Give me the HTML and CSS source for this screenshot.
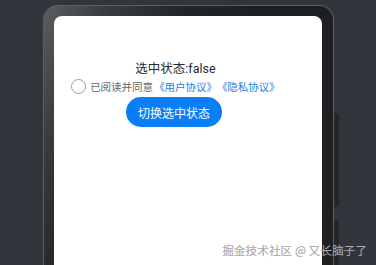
FILE: index.html
```html
<!DOCTYPE html>
<html lang="zh">
<head>
<meta charset="utf-8">
<link rel="stylesheet" href="styles.css">
</head>
<body>
<div class="stage">
  <div class="device">
    <div class="screen">
      <div class="content">
        <div class="status">选中状态:false</div>
        <div class="agree">
          <span class="radio"></span>
          <span class="agree-text">已阅读并同意<span class="link">《用户协议》</span><span class="link link-second">《隐私协议》</span></span>
        </div>
        <button class="toggle">切换选中状态</button>
      </div>
    </div>
  </div>
  <div class="side-buttons">
    <span class="side-btn side-btn-a"></span>
    <span class="side-btn side-btn-b"></span>
  </div>
</div>
<div class="watermark">掘金技术社区 @ 又长脑子了</div>
</body>
</html>
```
FILE: styles.css
```css
html, body {
  margin: 0;
  padding: 0;
  width: 376px;
  height: 265px;
  overflow: hidden;
  background: #31363d;
  font-family: Roboto, "Noto Sans CJK SC", sans-serif;
}
.stage {
  display: flex;
  align-items: flex-start;
  padding: 5px 0 0 43px;
}
.device {
  width: 268px;
  height: 300px;
  padding: 10px 11px 0 10px;
  border: 1px solid #5d5f63;
  border-bottom: none;
  border-radius: 15px 15px 0 0;
  background: linear-gradient(115deg, #5c5d60 0px, #3a3b3d 60px, #232426 130px, #1e1f21 200px);
}
.screen {
  height: 300px;
  background: #fff;
  border-radius: 8px 8px 0 0;
}
.content {
  display: flex;
  flex-direction: column;
  align-items: center;
  padding: 45px 28px 0 0;
}
.status {
  font-size: 12.5px;
  line-height: 16px;
  color: #2a2a2a;
  padding-left: 3px;
}
.agree {
  display: flex;
  align-items: center;
  gap: 4px;
  margin-top: 2px;
  height: 15px;
  padding-left: 3px;
}
.radio {
  width: 13px;
  height: 13px;
  border: 1px solid #9c9c9c;
  border-radius: 50%;
  flex: none;
}
.agree-text {
  font-size: 10.5px;
  line-height: 14px;
  color: #666;
  font-family: "Noto Sans CJK SC", sans-serif;
}
.link {
  color: #1b82e6;
  margin-left: 1px;
}
.link-second {
  margin-left: 5px;
}
.toggle {
  margin-top: 3px;
  height: 30px;
  padding: 0 12px;
  border: none;
  border-radius: 15px;
  background: #0a7ef8;
  color: #fff;
  font-size: 12px;
  font-family: "Noto Sans CJK SC", sans-serif;
}
.side-buttons {
  display: flex;
  flex-direction: column;
  gap: 13px;
  padding-top: 108px;
}
.side-btn {
  display: block;
  width: 5px;
  background: #25272a;
  border-radius: 0 2px 2px 0;
}
.side-btn-a { height: 94px; }
.side-btn-b { height: 60px; }
.watermark {
  position: absolute;
  right: 9px;
  bottom: 7px;
  font-size: 11.7px;
  line-height: 16px;
  color: #b0b0b0;
  text-shadow: 0 0 0.5px rgba(0,0,0,0.25);
  font-family: "Noto Sans CJK SC", sans-serif;
}
```
